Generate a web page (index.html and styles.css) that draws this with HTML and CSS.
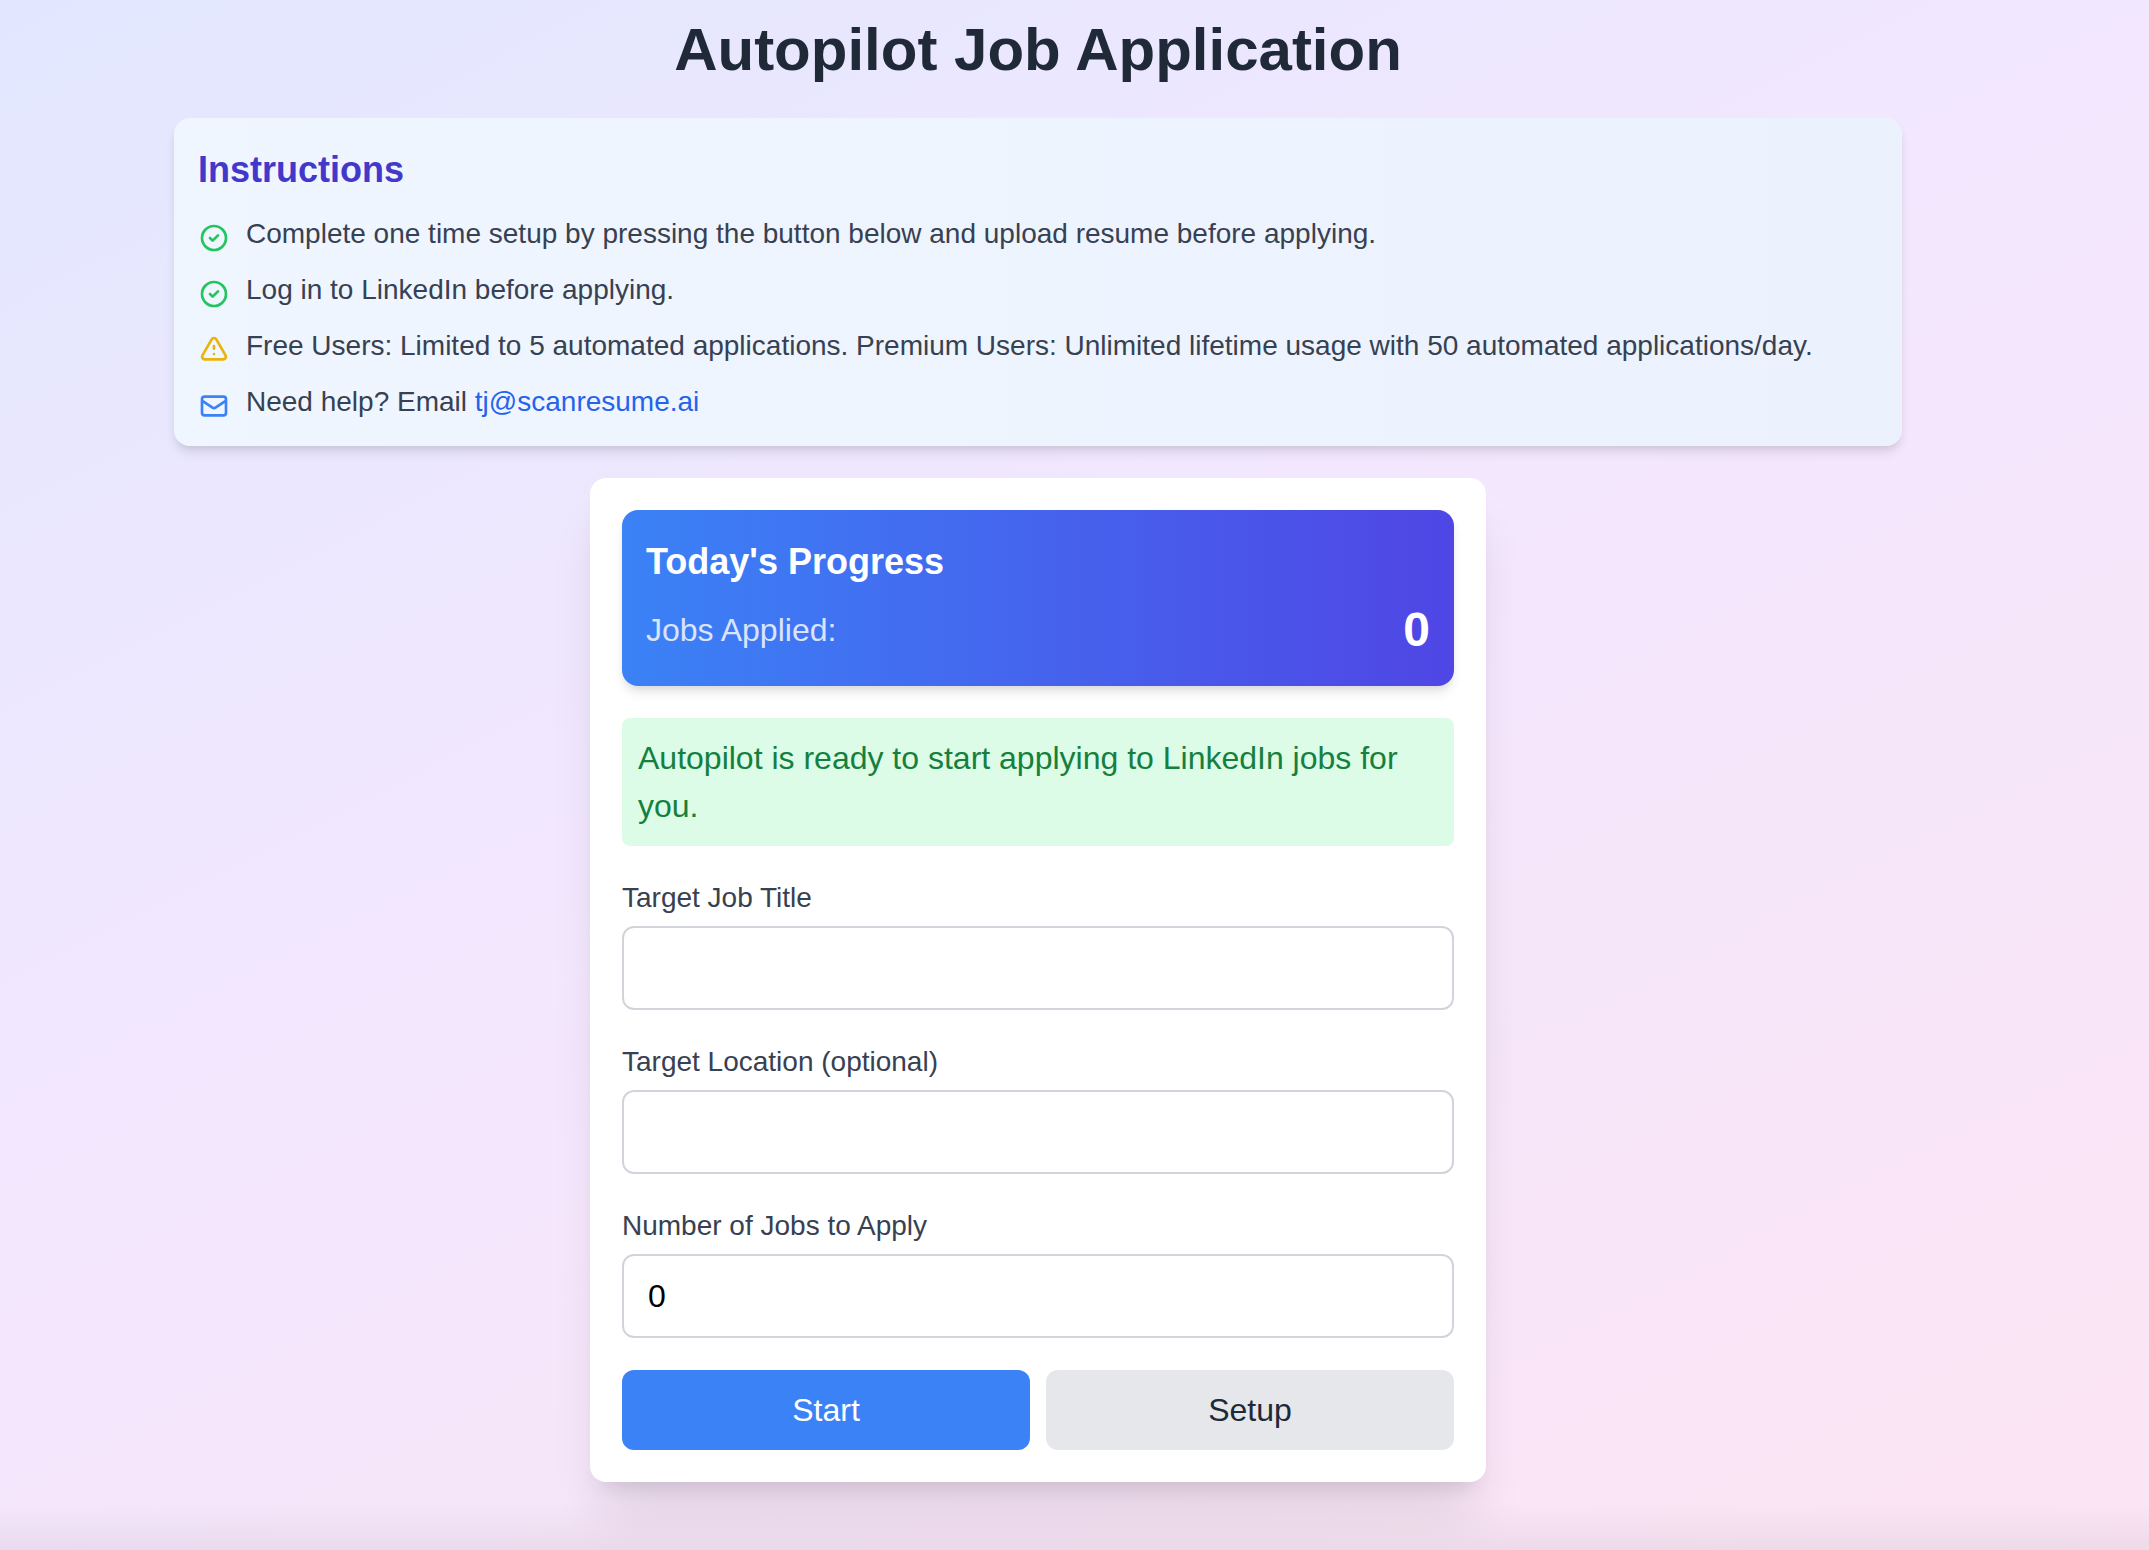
FILE: index.html
```html
<!DOCTYPE html>
<html lang="en">
<head>
    <meta charset="UTF-8">
    <meta name="viewport" content="width=device-width, initial-scale=1.0">
    <title>Autopilot Job Application</title>
    <link rel="stylesheet" href="styles.css">
</head>
<body>
    <main class="page">
        <h1 class="page-title">Autopilot Job Application</h1>

        <section class="instructions">
            <h2 class="section-title">Instructions</h2>
            <ul class="instruction-list">
                <li>
                    <svg class="icon icon-green" viewBox="0 0 24 24"><path d="M9 12l2 2 4-4m6 2a9 9 0 11-18 0 9 9 0 0118 0z"/></svg>
                    <span>Complete one time setup by pressing the button below and upload resume before applying.</span>
                </li>
                <li>
                    <svg class="icon icon-green" viewBox="0 0 24 24"><path d="M9 12l2 2 4-4m6 2a9 9 0 11-18 0 9 9 0 0118 0z"/></svg>
                    <span>Log in to LinkedIn before applying.</span>
                </li>
                <li>
                    <svg class="icon icon-yellow" viewBox="0 0 24 24"><path d="M12 9v2m0 4h.01m-6.938 4h13.856c1.54 0 2.502-1.667 1.732-3L13.732 4c-.77-1.333-2.694-1.333-3.464 0L3.34 16c-.77 1.333.192 3 1.732 3z"/></svg>
                    <span>Free Users: Limited to 5 automated applications. Premium Users: Unlimited lifetime usage with 50 automated applications/day.</span>
                </li>
                <li>
                    <svg class="icon icon-blue" viewBox="0 0 24 24"><path d="M3 8l7.89 5.26a2 2 0 002.22 0L21 8M5 19h14a2 2 0 002-2V7a2 2 0 00-2-2H5a2 2 0 00-2 2v10a2 2 0 002 2z"/></svg>
                    <span>Need help? Email <a href="mailto:tj@scanresume.ai">tj@scanresume.ai</a></span>
                </li>
            </ul>
        </section>

        <form class="card">
            <div class="progress">
                <h2 class="progress-title">Today's Progress</h2>
                <div class="progress-row">
                    <span class="progress-label">Jobs Applied:</span>
                    <span class="progress-count">0</span>
                </div>
            </div>

            <p class="status">Autopilot is ready to start applying to LinkedIn jobs for you.</p>

            <div class="field">
                <label for="jobTitle">Target Job Title</label>
                <input type="text" id="jobTitle">
            </div>
            <div class="field">
                <label for="location">Target Location (optional)</label>
                <input type="text" id="location">
            </div>
            <div class="field">
                <label for="jobCount">Number of Jobs to Apply</label>
                <input type="number" id="jobCount" value="0" min="0">
            </div>

            <div class="actions">
                <button type="button" class="btn btn-primary">Start</button>
                <button type="button" class="btn btn-secondary">Setup</button>
            </div>
        </form>
    </main>
</body>
</html>
```
FILE: styles.css
```css
* {
    box-sizing: border-box;
    margin: 0;
    padding: 0;
}
body {
    min-height: 100vh;
    font-family: Helvetica, "Liberation Sans", Arial, sans-serif;
    font-size: 32px;
    line-height: 48px;
    color: #1f2937;
    /* soft shade along the bottom edge, over the page gradient */
    background:
        linear-gradient(to top, rgba(0, 0, 0, 0.05), rgba(0, 0, 0, 0)) bottom / 100% 48px no-repeat,
        linear-gradient(153deg, #e2e7ff, #f3e7fe 45%, #fce5f4);
}
.page {
    display: flex;
    flex-direction: column;
    align-items: center;
    gap: 32px;
    padding: 14px 73px 68px 0;
}
.page-title {
    font-size: 60px;
    line-height: 72px;
    text-align: center;
}

/* Instructions */
.instructions {
    width: 100%;
    max-width: 1728px;
    padding: 24px;
    border-radius: 16px;
    background: linear-gradient(to right, #eff6ff, #ebf2fe);
    box-shadow: 0 8px 12px -2px rgba(0, 0, 0, 0.1), 0 4px 8px -4px rgba(0, 0, 0, 0.1);
}
.section-title {
    margin-bottom: 16px;
    font-size: 36px;
    line-height: 56px;
    color: #4338ca;
}
.instruction-list {
    display: flex;
    flex-direction: column;
    gap: 16px;
    list-style: none;
    font-size: 28px;
    line-height: 40px;
    color: #374151;
}
.instruction-list li {
    display: flex;
    align-items: flex-start;
    gap: 16px;
}
.instruction-list a {
    color: #2563eb;
    text-decoration: none;
}
.icon {
    flex-shrink: 0;
    width: 32px;
    height: 32px;
    margin-top: 8px;
    fill: none;
    stroke: currentColor;
    stroke-width: 2;
    stroke-linecap: round;
    stroke-linejoin: round;
}
.icon-green {
    color: #22c55e;
}
.icon-yellow {
    color: #eab308;
}
.icon-blue {
    color: #3b82f6;
}

/* Application form */
.card {
    display: flex;
    flex-direction: column;
    gap: 32px;
    width: 100%;
    max-width: 896px;
    padding: 32px;
    border-radius: 16px;
    background: #fff;
    box-shadow: 0 40px 50px -10px rgba(0, 0, 0, 0.1), 0 16px 20px -12px rgba(0, 0, 0, 0.1);
}
.progress {
    padding: 24px;
    border-radius: 16px;
    background: linear-gradient(to right, #3b82f6, #4f46e5);
    box-shadow: 0 8px 12px -2px rgba(0, 0, 0, 0.1), 0 4px 8px -4px rgba(0, 0, 0, 0.1);
    color: #fff;
}
.progress-title {
    margin-bottom: 8px;
    font-size: 36px;
    line-height: 56px;
}
.progress-row {
    display: flex;
    justify-content: space-between;
    align-items: center;
}
.progress-label {
    color: #dbe4fe;
}
.progress-count {
    font-size: 48px;
    line-height: 64px;
    font-weight: bold;
}
.status {
    padding: 16px;
    border-radius: 8px;
    background: #dcfce7;
    color: #15803d;
}
.field {
    display: flex;
    flex-direction: column;
    gap: 8px;
}
.field label {
    font-size: 28px;
    line-height: 40px;
    color: #374151;
}
.field input {
    width: 100%;
    height: 84px;
    padding: 16px 24px;
    border: 2px solid #d1d5db;
    border-radius: 12px;
    background: #fff;
    font: inherit;
    color: #000;
    appearance: textfield;
}
.actions {
    display: flex;
    gap: 16px;
}
.btn {
    flex: 1;
    padding: 16px 24px;
    border: 0;
    border-radius: 12px;
    font: inherit;
    cursor: pointer;
}
.btn-primary {
    background: #3b82f6;
    color: #fff;
}
.btn-secondary {
    background: #e5e7eb;
    color: #1f2937;
}
```
